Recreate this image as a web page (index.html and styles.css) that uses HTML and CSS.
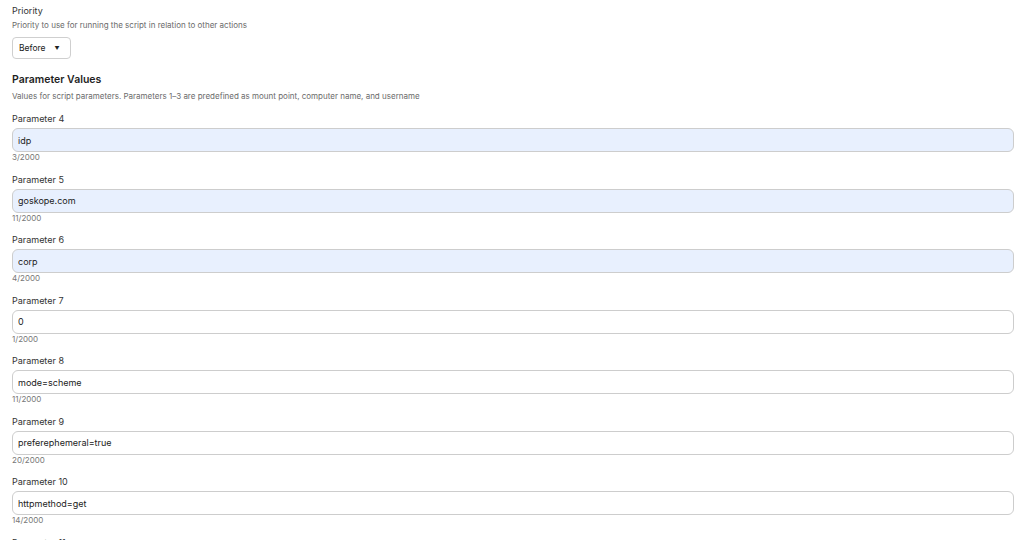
FILE: index.html
```html
<!DOCTYPE html>
<html lang="en">
<head>
    <meta charset="UTF-8">
    <meta name="viewport" content="width=device-width, initial-scale=1.0">
    <title>Script Settings</title>
    <link rel="stylesheet" href="styles.css">
</head>
<body>
<div class="settings">
    <!-- Priority -->
    <div class="setting">
        <div class="setting-label">Priority</div>
        <div class="setting-help">Priority to use for running the script in relation to other actions</div>
        <div class="dropdown">
            <span>Before</span>
            <span class="caret">&#9660;</span>
        </div>
    </div>

    <!-- Parameter Values -->
    <h3 class="section-title">Parameter Values</h3>
    <div class="setting-help">Values for script parameters. Parameters 1–3 are predefined as mount point, computer name, and username</div>

    <div class="params">
        <div class="param">
            <label class="param-label" for="p4">Parameter 4</label>
            <input class="param-input filled" id="p4" type="text" value="idp">
            <div class="param-count">3/2000</div>
        </div>
        <div class="param">
            <label class="param-label" for="p5">Parameter 5</label>
            <input class="param-input filled" id="p5" type="text" value="goskope.com">
            <div class="param-count">11/2000</div>
        </div>
        <div class="param">
            <label class="param-label" for="p6">Parameter 6</label>
            <input class="param-input filled" id="p6" type="text" value="corp">
            <div class="param-count">4/2000</div>
        </div>
        <div class="param">
            <label class="param-label" for="p7">Parameter 7</label>
            <input class="param-input" id="p7" type="text" value="0">
            <div class="param-count">1/2000</div>
        </div>
        <div class="param">
            <label class="param-label" for="p8">Parameter 8</label>
            <input class="param-input" id="p8" type="text" value="mode=scheme">
            <div class="param-count">11/2000</div>
        </div>
        <div class="param">
            <label class="param-label" for="p9">Parameter 9</label>
            <input class="param-input" id="p9" type="text" value="preferephemeral=true">
            <div class="param-count">20/2000</div>
        </div>
        <div class="param">
            <label class="param-label" for="p10">Parameter 10</label>
            <input class="param-input" id="p10" type="text" value="httpmethod=get">
            <div class="param-count">14/2000</div>
        </div>
        <div class="param">
            <label class="param-label" for="p11">Parameter 11</label>
            <input class="param-input" id="p11" type="text" value="">
            <div class="param-count">0/2000</div>
        </div>
    </div>
</div>
</body>
</html>
```

FILE: styles.css
```css
/* Page */
body {
    margin: 0;
    font-family: Inter, "Noto Sans", sans-serif;
    color: #2b2b2b;
    background: #fff;
}

.settings {
    padding: 5px 10px 0 12px;
}

/* Priority block */
.setting-label {
    font-size: 9px;
    line-height: 12px;
    color: #333;
}

.setting-help {
    font-size: 8px;
    line-height: 10px;
    color: #6b6b6b;
    margin-top: 3px;
}

.dropdown {
    display: inline-flex;
    align-items: center;
    gap: 9px;
    margin-top: 7px;
    height: 22px;
    padding: 0 10px 0 6px;
    box-sizing: border-box;
    border: 1px solid #cfcfcf;
    border-radius: 4px;
    font-size: 8.5px;
    color: #222;
}

.caret {
    font-size: 5px;
}

/* Section heading */
.section-title {
    margin: 14px 0 0;
    font-size: 10.5px;
    line-height: 14px;
    font-weight: 600;
    color: #1f1f1f;
}

.section-title + .setting-help {
    margin-top: 4px;
}

/* Parameter fields */
.params {
    margin-top: 12px;
    display: flex;
    flex-direction: column;
    gap: 10.5px;
}

.param-label {
    display: block;
    font-size: 9px;
    line-height: 12px;
    color: #333;
    margin-bottom: 3px;
}

.param-input {
    display: block;
    width: 100%;
    height: 24px;
    box-sizing: border-box;
    margin: 0;
    padding: 0 5px;
    border: 1px solid #cdcdcd;
    border-radius: 6px;
    font-family: inherit;
    font-size: 9px;
    color: #222;
    background: #fff;
    outline: none;
}

.param-input.filled {
    background: #e8f0fe;
}

.param-count {
    font-size: 8px;
    line-height: 11px;
    color: #777;
}
```
